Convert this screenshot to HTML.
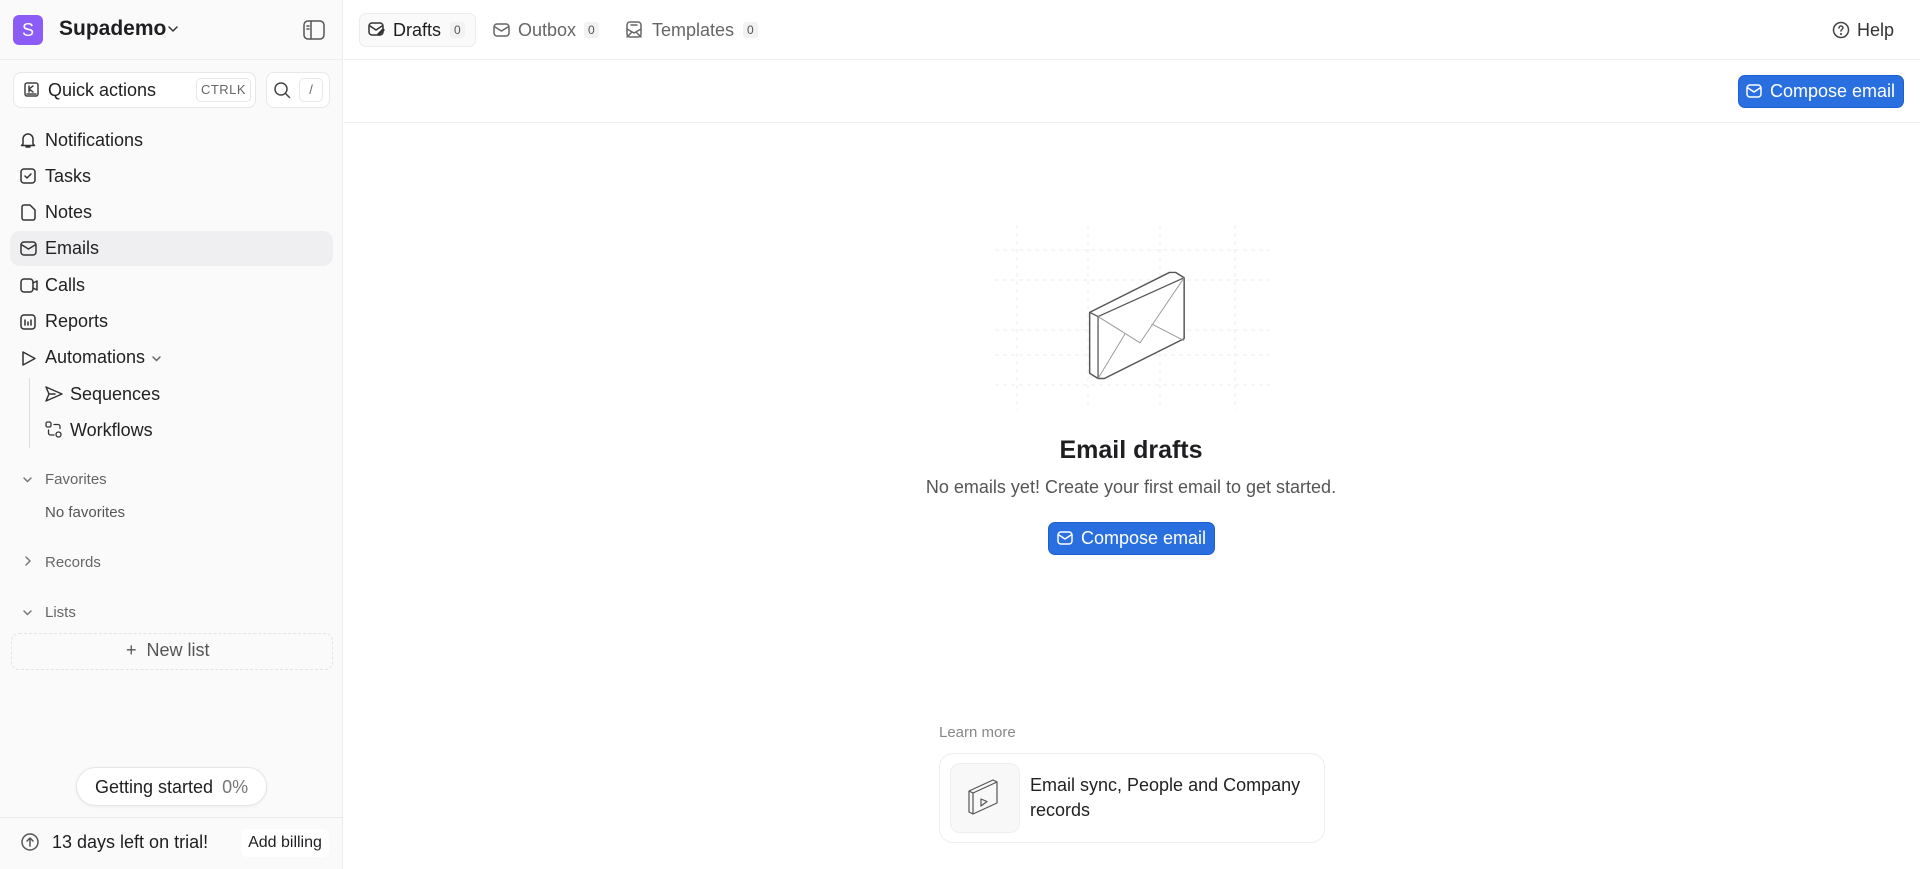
<!DOCTYPE html>
<html><head><meta charset="utf-8"><style>
*{box-sizing:border-box;margin:0;padding:0}
body{width:1920px;height:869px;overflow:hidden;font-family:"Liberation Sans",sans-serif;color:#1f1f22;background:#fff;position:relative}
.a{position:absolute}
.side{left:0;top:0;width:343px;height:869px;background:#fafafa;border-right:1px solid #ebebeb}
.ic{position:absolute;stroke:#333;fill:none;stroke-width:1.5;stroke-linecap:round;stroke-linejoin:round}
.nav{position:absolute;left:45px;font-size:18px;color:#222}
.sec{position:absolute;left:45px;font-size:15px;color:#666}
.badge{position:absolute;font-size:12px;color:#555;background:#f2f2f3;border-radius:3px;padding:1px 4px}
.btn{position:absolute;background:#2a6fe0;color:#fff;border-radius:7px;font-size:18px;border:1px solid #1d5fd0}
</style></head><body>
<div class="a side"></div>
<div class="a" style="left:13px;top:15px;width:30px;height:30px;border-radius:6px;background:#8b5cf6;color:#fff;font-size:18px;text-align:center;line-height:30px">S</div>
<div class="a" style="left:59px;top:17px;font-size:21px;font-weight:bold">Supademo</div>
<svg class="ic" style="left:167px;top:24px" width="12" height="10" viewBox="0 0 12 10"><path d="M2 3l4 4 4-4"/></svg>
<svg class="ic" style="left:303px;top:20px;stroke:#555" width="22" height="20" viewBox="0 0 22 20"><rect x="1" y="1" width="20" height="18" rx="4"/><path d="M8 1v18M4 6h2M4 9h2"/></svg>
<div class="a" style="left:0;top:59px;width:343px;border-top:1px solid #eee"></div>
<div class="a" style="left:13px;top:72px;width:243px;height:36px;background:#fff;border:1px solid #e8e8e8;border-radius:8px"></div>
<svg class="ic" style="left:24px;top:82px;stroke:#444" width="15" height="15" viewBox="0 0 15 15"><rect x="1" y="1" width="13" height="13" rx="2"/><path d="M5 4v6M5 7l4-3M5 7l4 3M3 12h9"/></svg>
<div class="a" style="left:48px;top:80px;font-size:18px">Quick actions</div>
<div class="a" style="left:196px;top:78px;width:55px;height:24px;border:1px solid #e6e6e6;border-radius:5px;font-size:13px;color:#666;text-align:center;line-height:22px;letter-spacing:.5px">CTRLK</div>
<div class="a" style="left:266px;top:72px;width:64px;height:36px;background:#fff;border:1px solid #e8e8e8;border-radius:8px"></div>
<svg class="ic" style="left:273px;top:81px;stroke:#444" width="18" height="18" viewBox="0 0 18 18"><circle cx="8" cy="8" r="6"/><path d="M12.5 12.5l4 4"/></svg>
<div class="a" style="left:299px;top:78px;width:24px;height:24px;border:1px solid #e6e6e6;border-radius:5px;font-size:13px;color:#666;text-align:center;line-height:22px">/</div>
<svg class="ic" style="left:20px;top:132px" width="16" height="17" viewBox="0 0 16 17"><path d="M3 12V7a5 5 0 0110 0v5l1.5 1.5h-13zM6 15h4"/></svg>
<div class="nav" style="top:130px">Notifications</div>
<svg class="ic" style="left:20px;top:168px" width="16" height="16" viewBox="0 0 16 16"><rect x="1" y="1" width="14" height="14" rx="3"/><path d="M5 8l2 2 4-4"/></svg>
<div class="nav" style="top:166px">Tasks</div>
<svg class="ic" style="left:21px;top:204px" width="15" height="17" viewBox="0 0 15 17"><path d="M1 3a2 2 0 012-2h6l5 5v8a2 2 0 01-2 2H3a2 2 0 01-2-2z"/></svg>
<div class="nav" style="top:202px">Notes</div>
<div class="a" style="left:10px;top:231px;width:323px;height:35px;background:#efeff1;border-radius:10px"></div>
<svg class="ic" style="left:20px;top:241px" width="17" height="15" viewBox="0 0 17 15"><rect x="1" y="1" width="15" height="13" rx="3"/><path d="M2 4l6.5 4L15 4"/></svg>
<div class="nav" style="top:238px">Emails</div>
<svg class="ic" style="left:20px;top:278px" width="18" height="15" viewBox="0 0 18 15"><rect x="1" y="1" width="12" height="13" rx="3"/><path d="M13 5l4-2v9l-4-2"/></svg>
<div class="nav" style="top:275px">Calls</div>
<svg class="ic" style="left:20px;top:314px" width="16" height="16" viewBox="0 0 16 16"><rect x="1" y="1" width="14" height="14" rx="3"/><path d="M5 6v5M8 8v3M11 6v5"/></svg>
<div class="nav" style="top:311px">Reports</div>
<svg class="ic" style="left:21px;top:350px" width="16" height="17" viewBox="0 0 16 17"><path d="M2 2l12 6.5L2 15z"/></svg>
<div class="nav" style="top:347px">Automations</div>
<svg class="ic" style="left:151px;top:354px;stroke:#666" width="11" height="9" viewBox="0 0 11 9"><path d="M2 3l3.5 3.5L9 3"/></svg>
<div class="a" style="left:29px;top:378px;height:70px;border-left:1px solid #ddd"></div>
<svg class="ic" style="left:45px;top:386px" width="18" height="16" viewBox="0 0 18 16"><path d="M1 1l16 7-16 7 3-7zM4 8h6"/></svg>
<div class="nav" style="left:70px;top:384px">Sequences</div>
<svg class="ic" style="left:45px;top:421px;stroke-width:1.3" width="18" height="18" viewBox="0 0 18 18"><rect x="1" y="1" width="5" height="5" rx="1.5"/><circle cx="13.5" cy="13.5" r="2.5"/><path d="M9 3.5h4a2 2 0 012 2v2M3.5 9v3a2 2 0 002 2H9"/></svg>
<div class="nav" style="left:70px;top:420px">Workflows</div>
<svg class="ic" style="left:22px;top:475px;stroke:#777" width="11" height="9" viewBox="0 0 11 9"><path d="M2 3l3.5 3.5L9 3"/></svg>
<div class="sec" style="top:471px">Favorites</div>
<div class="sec" style="top:504px;color:#555">No favorites</div>
<svg class="ic" style="left:24px;top:555px;stroke:#777" width="9" height="12" viewBox="0 0 9 12"><path d="M2 2l4 4-4 4"/></svg>
<div class="sec" style="top:554px">Records</div>
<svg class="ic" style="left:22px;top:608px;stroke:#777" width="11" height="9" viewBox="0 0 11 9"><path d="M2 3l3.5 3.5L9 3"/></svg>
<div class="sec" style="top:604px">Lists</div>
<div class="a" style="left:11px;top:633px;width:322px;height:37px;border:1px dashed #e3e3e3;border-radius:8px"></div>
<div class="a" style="left:126px;top:640px;font-size:18px;color:#555">+&nbsp; New list</div>
<div class="a" style="left:76px;top:767px;width:191px;height:39px;background:#fff;border:1px solid #e6e6e6;border-radius:20px;box-shadow:0 1px 3px rgba(0,0,0,.06)"></div>
<div class="a" style="left:95px;top:777px;font-size:18px">Getting started <span style="color:#777;margin-left:4px">0%</span></div>
<div class="a" style="left:0;top:817px;width:343px;border-top:1px solid #eaeaea"></div>
<svg class="ic" style="left:20px;top:832px;stroke:#555" width="20" height="20" viewBox="0 0 20 20"><circle cx="10" cy="10" r="8"/><path d="M10 14V6M7 9l3-3 3 3"/></svg>
<div class="a" style="left:52px;top:832px;font-size:18px">13 days left on trial!</div>
<div class="a" style="left:241px;top:829px;width:88px;height:28px;background:#fff;border-radius:6px;font-size:16px;line-height:28px;text-align:center">Add billing</div>
<div class="a" style="left:359px;top:13px;width:117px;height:34px;background:#fafafa;border:1px solid #ececec;border-radius:7px"></div>
<svg class="ic" style="left:368px;top:22px" width="17" height="15" viewBox="0 0 17 15"><rect x="1" y="1" width="14" height="12" rx="3"/><path d="M2 4l6 4 6-4M10 12l5-5 1 1-5 5z"/></svg>
<div class="a" style="left:393px;top:20px;font-size:18px">Drafts</div>
<div class="badge" style="left:450px;top:22px">0</div>
<svg class="ic" style="left:493px;top:23px;stroke:#666" width="17" height="14" viewBox="0 0 17 14"><rect x="1" y="1" width="15" height="12" rx="3"/><path d="M2 4l6.5 4L15 4"/></svg>
<div class="a" style="left:518px;top:20px;font-size:18px;color:#666">Outbox</div>
<div class="badge" style="left:584px;top:22px">0</div>
<svg class="ic" style="left:626px;top:21px;stroke:#666" width="16" height="17" viewBox="0 0 16 17"><rect x="1" y="1" width="14" height="15" rx="3"/><path d="M5 4h6M1 8l7 4 7-4M1 16l5-5M15 16l-5-5"/></svg>
<div class="a" style="left:652px;top:20px;font-size:18px;color:#666">Templates</div>
<div class="badge" style="left:743px;top:22px">0</div>
<svg class="ic" style="left:1832px;top:21px;stroke:#444" width="18" height="18" viewBox="0 0 18 18"><circle cx="9" cy="9" r="7.5"/><path d="M7 7a2 2 0 114 0c0 1.2-2 1.5-2 3"/><circle cx="9" cy="13" r=".4"/></svg>
<div class="a" style="left:1857px;top:20px;font-size:18px;color:#333">Help</div>
<div class="a" style="left:344px;top:59px;width:1576px;border-top:1px solid #eee"></div>
<div class="btn" style="left:1738px;top:75px;width:166px;height:33px"></div>
<svg class="ic" style="left:1746px;top:84px;stroke:#fff" width="16" height="14" viewBox="0 0 16 14"><rect x="1" y="1" width="14" height="12" rx="3"/><path d="M2 4l6 4 6-4"/></svg>
<div class="a" style="left:1770px;top:81px;font-size:18px;color:#fff">Compose email</div>
<div class="a" style="left:344px;top:122px;width:1576px;border-top:1px solid #eee"></div>
<svg class="a" style="left:995px;top:225px" width="275" height="185" viewBox="0 0 275 185">
<g stroke="#ededed" stroke-dasharray="4 4" fill="none">
<path d="M0 25h275M0 55h275M0 105h275M0 130h275M0 160h275M93 0v185M165 0v185M22 0v185M240 0v185"/>
</g>
<g transform="translate(-3,38) scale(1.05)">
<g stroke="#555" fill="#fff" stroke-width="1.4" stroke-linejoin="round">
<path d="M93 47l76-38 6 0 8 5v58l-76 38-6 0-8-5z"/>
</g>
<g stroke="#555" fill="none" stroke-width="1.2">
<path d="M93 47l8 4 82-37M101 51v59"/>
</g>
<g stroke="#999" fill="none" stroke-width=".9">
<path d="M101 51l40 25 42-62M101 110l26-43M152 58l31 16"/>
</g>
</g>
</svg>
<div class="a" style="left:0;width:2262px;top:436px;text-align:center;font-size:25px;font-weight:bold;color:#1f1f22">Email drafts</div>
<div class="a" style="left:0;width:2262px;top:477px;text-align:center;font-size:18px;color:#555">No emails yet! Create your first email to get started.</div>
<div class="btn" style="left:1048px;top:522px;width:167px;height:33px"></div>
<svg class="ic" style="left:1057px;top:531px;stroke:#fff" width="16" height="14" viewBox="0 0 16 14"><rect x="1" y="1" width="14" height="12" rx="3"/><path d="M2 4l6 4 6-4"/></svg>
<div class="a" style="left:1081px;top:528px;font-size:18px;color:#fff">Compose email</div>
<div class="a" style="left:939px;top:724px;font-size:15px;color:#888">Learn more</div>
<div class="a" style="left:939px;top:753px;width:386px;height:90px;border:1px solid #eee;border-radius:14px;background:#fff"></div>
<div class="a" style="left:950px;top:763px;width:70px;height:70px;border:1px solid #eee;border-radius:10px;background:#f8f8f8"></div>
<svg class="a" style="left:966px;top:778px" width="38" height="40" viewBox="0 0 38 40"><g fill="none" stroke="#555" stroke-width="1.2" stroke-linejoin="round"><path d="M3 13l24-11 4 2v21L7 36l-4-2z"/><path d="M3 13l4 2 24-11M7 15v21"/><path d="M15 21v7l6-4.5z"/></g></svg>
<div class="a" style="left:1030px;top:773px;font-size:18px;line-height:25px;color:#222">Email sync, People and Company<br>records</div>
</body></html>
